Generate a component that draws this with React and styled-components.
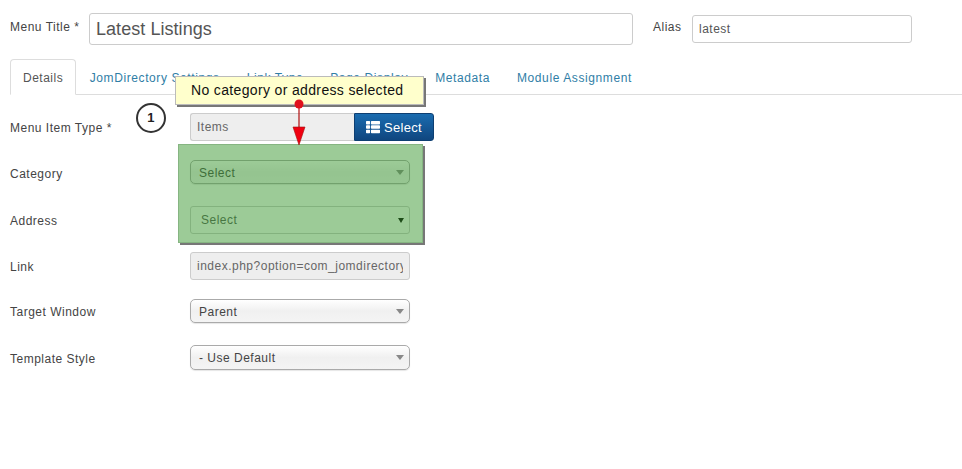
import styled, { createGlobalStyle } from "styled-components"
import { FaThList } from "react-icons/fa"

const GlobalStyle = createGlobalStyle`
  html, body {
    margin: 0;
    background: #fff;
  }
  body {
    font-family: "Liberation Sans", Arial, sans-serif;
    font-size: 12px;
    letter-spacing: 0.5px;
    color: #555;
  }
`

const Page = styled.div`
  position: relative;
  width: 962px;
  height: 469px;
  padding: 13px 0 0 10px;
  box-sizing: border-box;
  overflow: hidden;
`

const TitleRow = styled.div`
  display: flex;
  align-items: flex-start;
`

const TitleLabel = styled.label`
  width: ${(p) => p.$width}px;
  margin-left: ${(p) => p.$left || 0}px;
  padding-top: 7px;
  line-height: 14px;
  color: #444;
`

const TextInput = styled.div`
  box-sizing: border-box;
  width: ${(p) => p.$width}px;
  height: ${(p) => p.$height}px;
  margin-top: ${(p) => p.$top || 0}px;
  padding-left: 6px;
  font-size: ${(p) => p.$size}px;
  letter-spacing: ${(p) => p.$spacing}px;
  line-height: ${(p) => p.$height - 2}px;
  border: 1px solid #ccc;
  border-radius: 3px;
  color: #555;
  white-space: nowrap;
`

const Tabs = styled.div`
  display: flex;
  box-sizing: border-box;
  height: 36px;
  margin-top: 14px;
  border-bottom: 1px solid #ddd;
`

const Tab = styled.div`
  box-sizing: border-box;
  height: 36px;
  padding: 0 ${(p) => (p.$active ? 12 : 12.5)}px;
  line-height: 36px;
  letter-spacing: ${(p) => (p.$active ? 0.5 : 0.6)}px;
  white-space: nowrap;
  color: ${(p) => (p.$active ? "#555" : "#2f7ea6")};
  background: ${(p) => (p.$active ? "#fff" : "transparent")};
  border: 1px solid ${(p) => (p.$active ? "#ddd" : "transparent")};
  border-bottom-color: ${(p) => (p.$active ? "#fff" : "transparent")};
  border-radius: 4px 4px 0 0;
`

const Form = styled.div`
  display: flex;
  flex-direction: column;
  margin-top: 18px;
`

const Row = styled.div`
  display: flex;
  align-items: center;
  height: ${(p) => p.$height}px;
  margin-bottom: ${(p) => p.$gap}px;
`

const RowLabel = styled.label`
  width: 180px;
  flex: none;
  padding-top: ${(p) => p.$drop ?? 1}px;
  color: #444;
`

const InputGroup = styled.div`
  display: flex;
  height: 28px;
`

const ReadOnly = styled.div`
  box-sizing: border-box;
  width: ${(p) => p.$width}px;
  height: 28px;
  padding: 0 6px;
  line-height: 27px;
  background: #eee;
  border: 1px solid #ccc;
  border-radius: ${(p) => (p.$joined ? "3px 0 0 3px" : "3px")};
  border-right-width: ${(p) => (p.$joined ? 0 : 1)}px;
  color: #666;
`

const ReadOnlyValue = styled.div`
  overflow: hidden;
  white-space: nowrap;
`

const SelectButton = styled.div`
  box-sizing: border-box;
  display: flex;
  align-items: center;
  justify-content: center;
  gap: 4px;
  width: 80px;
  height: 28px;
  font-size: 13px;
  letter-spacing: 0.3px;
  color: #fff;
  background: linear-gradient(#1a6cb0, #10467f);
  border: 1px solid #0e3f72;
  border-radius: 0 3px 3px 0;
`

const Dropdown = styled.div`
  box-sizing: border-box;
  position: relative;
  width: 220px;
  height: ${(p) => p.$height || 24}px;
  padding-left: 8px;
  line-height: ${(p) => p.$height || 24}px;
  color: #444;
  background: linear-gradient(#fff, #f0f0f0 50%, #f4f4f4);
  border: 1px solid #aaa;
  border-radius: 5px;
  box-shadow: 0 1px 1px rgba(0, 0, 0, 0.1);
  white-space: nowrap;

  &::after {
    content: "";
    position: absolute;
    top: 9px;
    right: 5px;
    border-top: 5px solid #888;
    border-left: 4px solid transparent;
    border-right: 4px solid transparent;
  }
`

const NativeSelect = styled.div`
  box-sizing: border-box;
  position: relative;
  width: 220px;
  height: 28px;
  padding-left: 10px;
  line-height: 27px;
  color: #555;
  background: #fff;
  border: 1px solid #ccc;
  border-radius: 3px;

  &::after {
    content: "";
    position: absolute;
    top: 11px;
    right: 5px;
    border-top: 5px solid #000;
    border-left: 3px solid transparent;
    border-right: 3px solid transparent;
  }
`

/* annotation layer drawn on top of the form */
const GreenHighlight = styled.div`
  position: absolute;
  left: 178px;
  top: 144px;
  width: 245px;
  height: 99px;
  background: rgba(57, 151, 47, 0.5);
  border: 1px solid #86b582;
  box-sizing: border-box;
  box-shadow: 2px 2px 0 #777;
`

const Note = styled.div`
  position: absolute;
  left: 175px;
  top: 76px;
  box-sizing: border-box;
  width: 249px;
  height: 29px;
  padding-left: 15px;
  font-size: 14px;
  letter-spacing: 0.35px;
  line-height: 27px;
  color: #111;
  background: #ffffcc;
  border: 1px solid #bbb;
  box-shadow: 2px 2px 0 #777;
`

const Badge = styled.div`
  position: absolute;
  left: 136px;
  top: 103px;
  box-sizing: border-box;
  width: 30px;
  height: 30px;
  border: 2px solid #333;
  border-radius: 50%;
  background: #fff;
  font-size: 13px;
  font-weight: bold;
  line-height: 26px;
  text-align: center;
  color: #222;
`

const Pointer = styled.svg`
  position: absolute;
  left: 290px;
  top: 98px;
`

export default function App() {
  return (
    <Page>
      <GlobalStyle />
      <TitleRow>
        <TitleLabel $width={79}>Menu Title *</TitleLabel>
        <TextInput $width={544} $height={32} $size={18} $spacing={0.05}>Latest Listings</TextInput>
        <TitleLabel $width={39} $left={20}>Alias</TitleLabel>
        <TextInput $width={220} $height={28} $top={2} $size={12} $spacing={0.5}>latest</TextInput>
      </TitleRow>
      <Tabs>
        <Tab $active>Details</Tab>
        <Tab>JomDirectory Settings</Tab>
        <Tab>Link Type</Tab>
        <Tab>Page Display</Tab>
        <Tab>Metadata</Tab>
        <Tab>Module Assignment</Tab>
      </Tabs>
      <Form>
        <Row $height={28} $gap={19}>
          <RowLabel>Menu Item Type *</RowLabel>
          <InputGroup>
            <ReadOnly $width={164} $joined>Items</ReadOnly>
            <SelectButton><FaThList size={14} />Select</SelectButton>
          </InputGroup>
        </Row>
        <Row $height={24} $gap={22}>
          <RowLabel $drop={3}>Category</RowLabel>
          <Dropdown>Select</Dropdown>
        </Row>
        <Row $height={28} $gap={18}>
          <RowLabel>Address</RowLabel>
          <NativeSelect>Select</NativeSelect>
        </Row>
        <Row $height={28} $gap={19}>
          <RowLabel>Link</RowLabel>
          <ReadOnly $width={220}>
            <ReadOnlyValue>index.php?option=com_jomdirectory</ReadOnlyValue>
          </ReadOnly>
        </Row>
        <Row $height={24} $gap={22}>
          <RowLabel>Target Window</RowLabel>
          <Dropdown>Parent</Dropdown>
        </Row>
        <Row $height={25} $gap={0}>
          <RowLabel $drop={3}>Template Style</RowLabel>
          <Dropdown $height={25}>- Use Default</Dropdown>
        </Row>
      </Form>

      <GreenHighlight />
      <Note>No category or address selected</Note>
      <Badge>1</Badge>
      <Pointer width="18" height="50" viewBox="0 0 18 50">
        <line x1="9" y1="6" x2="9" y2="30" stroke="#b01010" strokeWidth="1.2" />
        <circle cx="9" cy="6" r="4.5" fill="#e0101c" />
        <polygon points="3,29 15,29 9,47" fill="#f00010" stroke="#a01010" strokeWidth="0.6" />
      </Pointer>
    </Page>
  )
}
